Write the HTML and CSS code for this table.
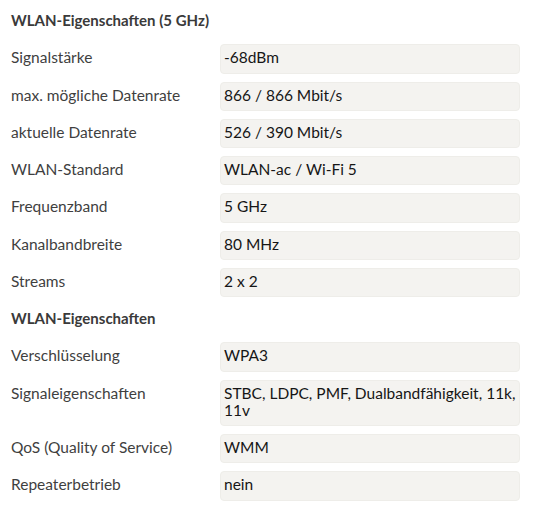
FILE: index.html
```html
<!DOCTYPE html>
<html lang="de">
<head>
<meta charset="utf-8">
<link rel="stylesheet" href="styles.css">
</head>
<body>
<div class="page">
  <div class="heading">WLAN-Eigenschaften (5 GHz)</div>
  <div class="row"><div class="label">Signalstärke</div><div class="value">-68dBm</div></div>
  <div class="row"><div class="label">max. mögliche Datenrate</div><div class="value">866 / 866 Mbit/s</div></div>
  <div class="row"><div class="label">aktuelle Datenrate</div><div class="value">526 / 390 Mbit/s</div></div>
  <div class="row"><div class="label">WLAN-Standard</div><div class="value">WLAN-ac / Wi-Fi 5</div></div>
  <div class="row"><div class="label">Frequenzband</div><div class="value">5 GHz</div></div>
  <div class="row"><div class="label">Kanalbandbreite</div><div class="value">80 MHz</div></div>
  <div class="row"><div class="label">Streams</div><div class="value">2 x 2</div></div>
  <div class="heading">WLAN-Eigenschaften</div>
  <div class="row"><div class="label">Verschlüsselung</div><div class="value">WPA3</div></div>
  <div class="row"><div class="label">Signaleigenschaften</div><div class="value">STBC, LDPC, PMF, Dualbandfähigkeit, 11k, 11v</div></div>
  <div class="row"><div class="label">QoS (Quality of Service)</div><div class="value">WMM</div></div>
  <div class="row"><div class="label">Repeaterbetrieb</div><div class="value">nein</div></div>
</div>
</body>
</html>
```

FILE: styles.css
```css
html, body {
  margin: 0;
  padding: 0;
  background: #ffffff;
}
.page {
  padding: 7px 0 0 11px;
  font-family: "Lato", "Liberation Sans", sans-serif;
  font-size: 15.5px;
  line-height: 17.25px;
  display: flex;
  flex-direction: column;
  gap: 8px;
}
.heading {
  font-size: 15px;
  font-weight: bold;
  color: #3a3a3a;
  padding: 5px 0 7px;
}
.row {
  display: grid;
  grid-template-columns: 209px 300px;
}
.label {
  color: #3f3f3f;
  padding: 5px 0 7px;
}
.value {
  color: #161616;
  background: #f4f3f0;
  border: 1px solid #eeede9;
  border-radius: 4px;
  padding: 4px 3px 6px;
}
```
